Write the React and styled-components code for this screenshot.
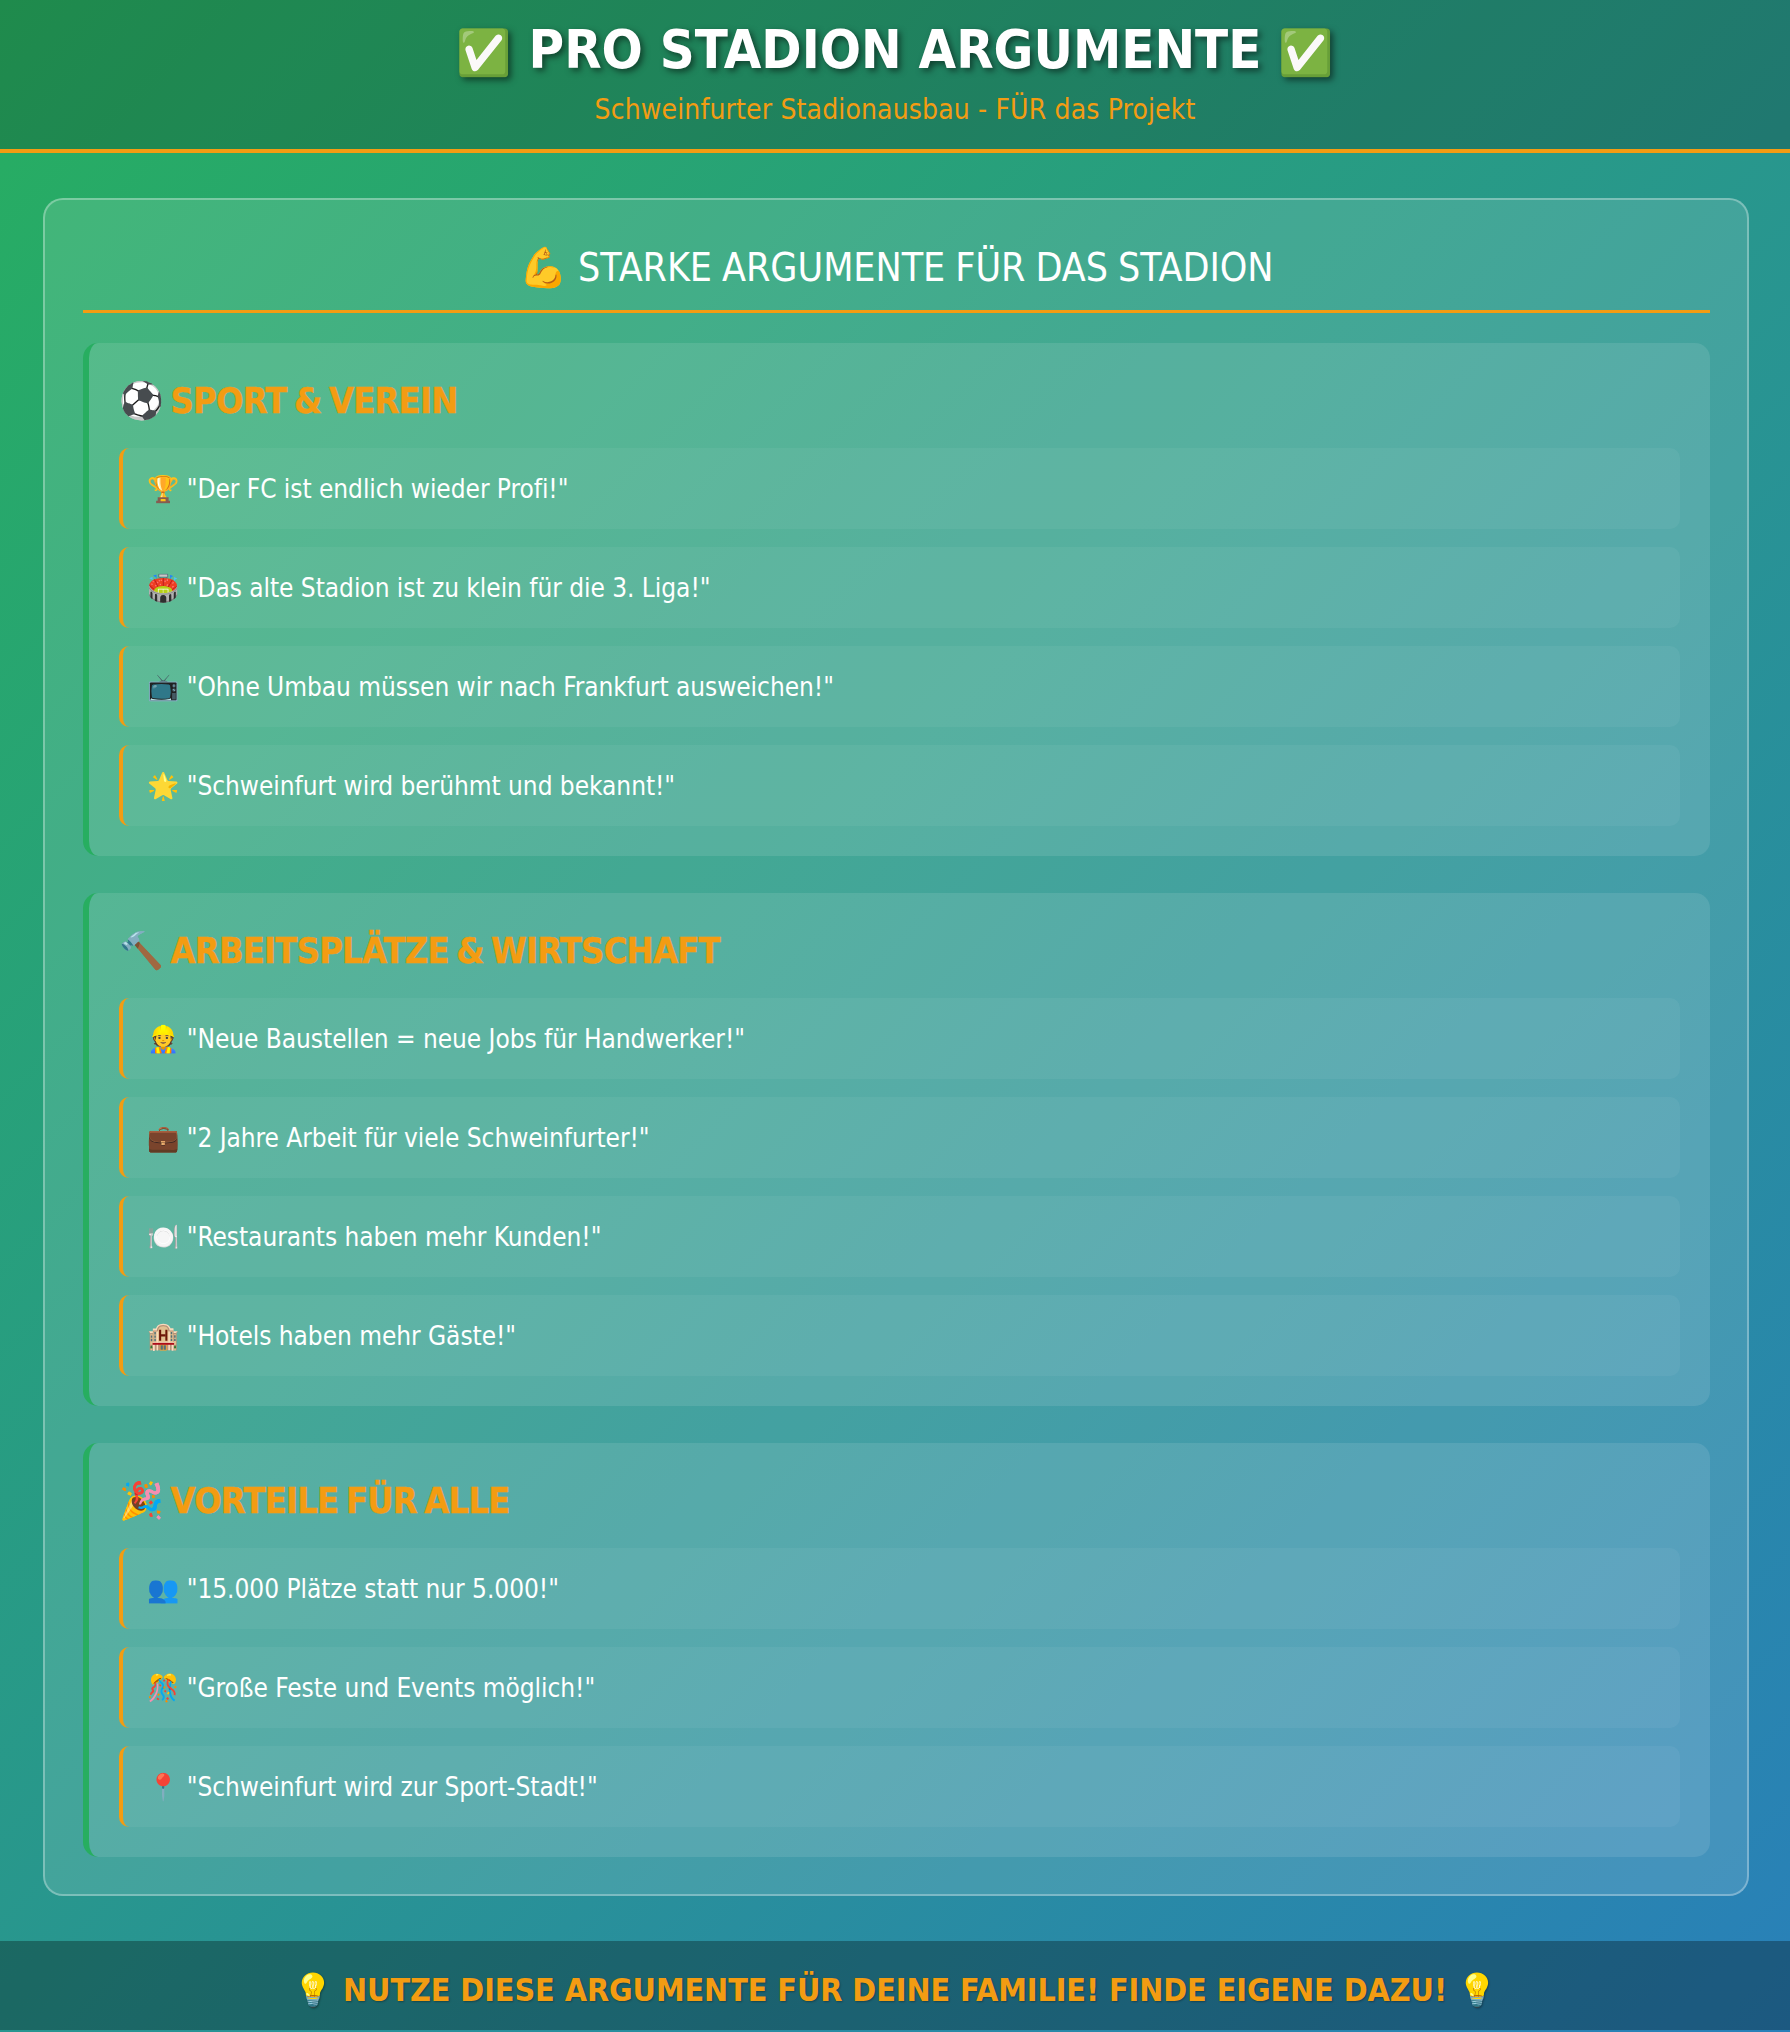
import React from "react";
import styled, { createGlobalStyle } from "styled-components";

const orange = "#f39c12";
const green = "#27ae60";

const GlobalStyle = createGlobalStyle`
  * { box-sizing: border-box; margin: 0; padding: 0; }
  html, body { height: 2032px; }
  body {
    background: linear-gradient(135deg, ${green} 0%, #2980b9 100%);
    color: #fff;
    font-family: "DejaVu Sans Condensed", "DejaVu Sans", "Noto Color Emoji", sans-serif;
    font-stretch: condensed;
  }
`;

const Page = styled.div`
  display: flex;
  flex-direction: column;
  height: 2032px;
`;

const Header = styled.header`
  height: 153px;
  padding-top: 17px;
  background: rgba(0, 0, 0, 0.2);
  border-bottom: 4px solid ${orange};
  text-align: center;
`;

const Title = styled.h1`
  font-size: 54px;
  line-height: 66px;
  font-weight: 700;
  text-shadow: 3px 3px 6px rgba(0, 0, 0, 0.5);
`;

const Subtitle = styled.p`
  font-size: 28px;
  line-height: 38px;
  letter-spacing: 0.15px;
  color: ${orange};
  margin-top: 5px;
`;

const Emoji = styled.span`
  font-size: ${(p) => p.$scale || 1}em;
`;

const Main = styled.main`
  flex: 1;
  padding: 45px 41px 45px 43px;
`;

const Card = styled.section`
  padding: 38px 37px 37px 38px;
  background: rgba(255, 255, 255, 0.13);
  border: 2px solid rgba(255, 255, 255, 0.3);
  border-radius: 20px;
`;

const CardTitle = styled.h2`
  height: 75px;
  font-size: 39px;
  line-height: 59px;
  font-weight: 400;
  letter-spacing: -0.05px;
  word-spacing: -1px;
  text-align: center;
  border-bottom: 3px solid ${orange};
  margin-bottom: 30px;
`;

const Group = styled.div`
  padding: 30px;
  background: rgba(255, 255, 255, 0.1);
  border-left: 6px solid ${green};
  border-radius: 15px;
  & + & { margin-top: 37px; }
`;

const GroupTitle = styled.h3`
  padding-top: 5px;
  font-size: 36px;
  line-height: 45px;
  font-weight: 700;
  letter-spacing: -0.8px;
  word-spacing: -3px;
  -webkit-text-stroke: 0.4px ${orange};
  color: ${orange};
  margin-bottom: 25px;
`;

const Item = styled.div`
  height: 81px;
  display: flex;
  align-items: center;
  padding-left: 24px;
  font-size: 26px;
  letter-spacing: -0.04px;
  background: rgba(255, 255, 255, 0.05);
  border-left: 4px solid ${orange};
  border-radius: 10px;
  & + & { margin-top: 18px; }
`;

const Footer = styled.footer`
  height: 89px;
  margin-bottom: 2px;
  padding-top: 8px;
  display: flex;
  align-items: center;
  justify-content: center;
  background: rgba(0, 0, 0, 0.3);
  color: ${orange};
  font-size: 32px;
  font-weight: 700;
  letter-spacing: -0.06px;
  text-shadow: 1px 1px 2px rgba(0, 0, 0, 0.3);
  white-space: pre;
`;

const groups = [
  {
    title: "⚽ SPORT & VEREIN",
    items: [
      "🏆 \"Der FC ist endlich wieder Profi!\"",
      "🏟️ \"Das alte Stadion ist zu klein für die 3. Liga!\"",
      "📺 \"Ohne Umbau müssen wir nach Frankfurt ausweichen!\"",
      "🌟 \"Schweinfurt wird berühmt und bekannt!\"",
    ],
  },
  {
    title: "🔨 ARBEITSPLÄTZE & WIRTSCHAFT",
    items: [
      "👷 \"Neue Baustellen = neue Jobs für Handwerker!\"",
      "💼 \"2 Jahre Arbeit für viele Schweinfurter!\"",
      "🍽️ \"Restaurants haben mehr Kunden!\"",
      "🏨 \"Hotels haben mehr Gäste!\"",
    ],
  },
  {
    title: "🎉 VORTEILE FÜR ALLE",
    items: [
      "👥 \"15.000 Plätze statt nur 5.000!\"",
      "🎊 \"Große Feste und Events möglich!\"",
      "📍 \"Schweinfurt wird zur Sport-Stadt!\"",
    ],
  },
];

export default function App() {
  return (
    <Page>
      <GlobalStyle />
      <Header>
        <Title>
          <Emoji $scale={0.82}>✅</Emoji> PRO STADION ARGUMENTE <Emoji $scale={0.82}>✅</Emoji>
        </Title>
        <Subtitle>Schweinfurter Stadionausbau - FÜR das Projekt</Subtitle>
      </Header>
      <Main>
        <Card>
          <CardTitle>💪 STARKE ARGUMENTE FÜR DAS STADION</CardTitle>
          {groups.map((group) => (
            <Group key={group.title}>
              <GroupTitle>{group.title}</GroupTitle>
              {group.items.map((item) => (
                <Item key={item}>{item}</Item>
              ))}
            </Group>
          ))}
        </Card>
      </Main>
      <Footer>💡 NUTZE DIESE ARGUMENTE FÜR DEINE FAMILIE! FINDE EIGENE DAZU! 💡</Footer>
    </Page>
  );
}
